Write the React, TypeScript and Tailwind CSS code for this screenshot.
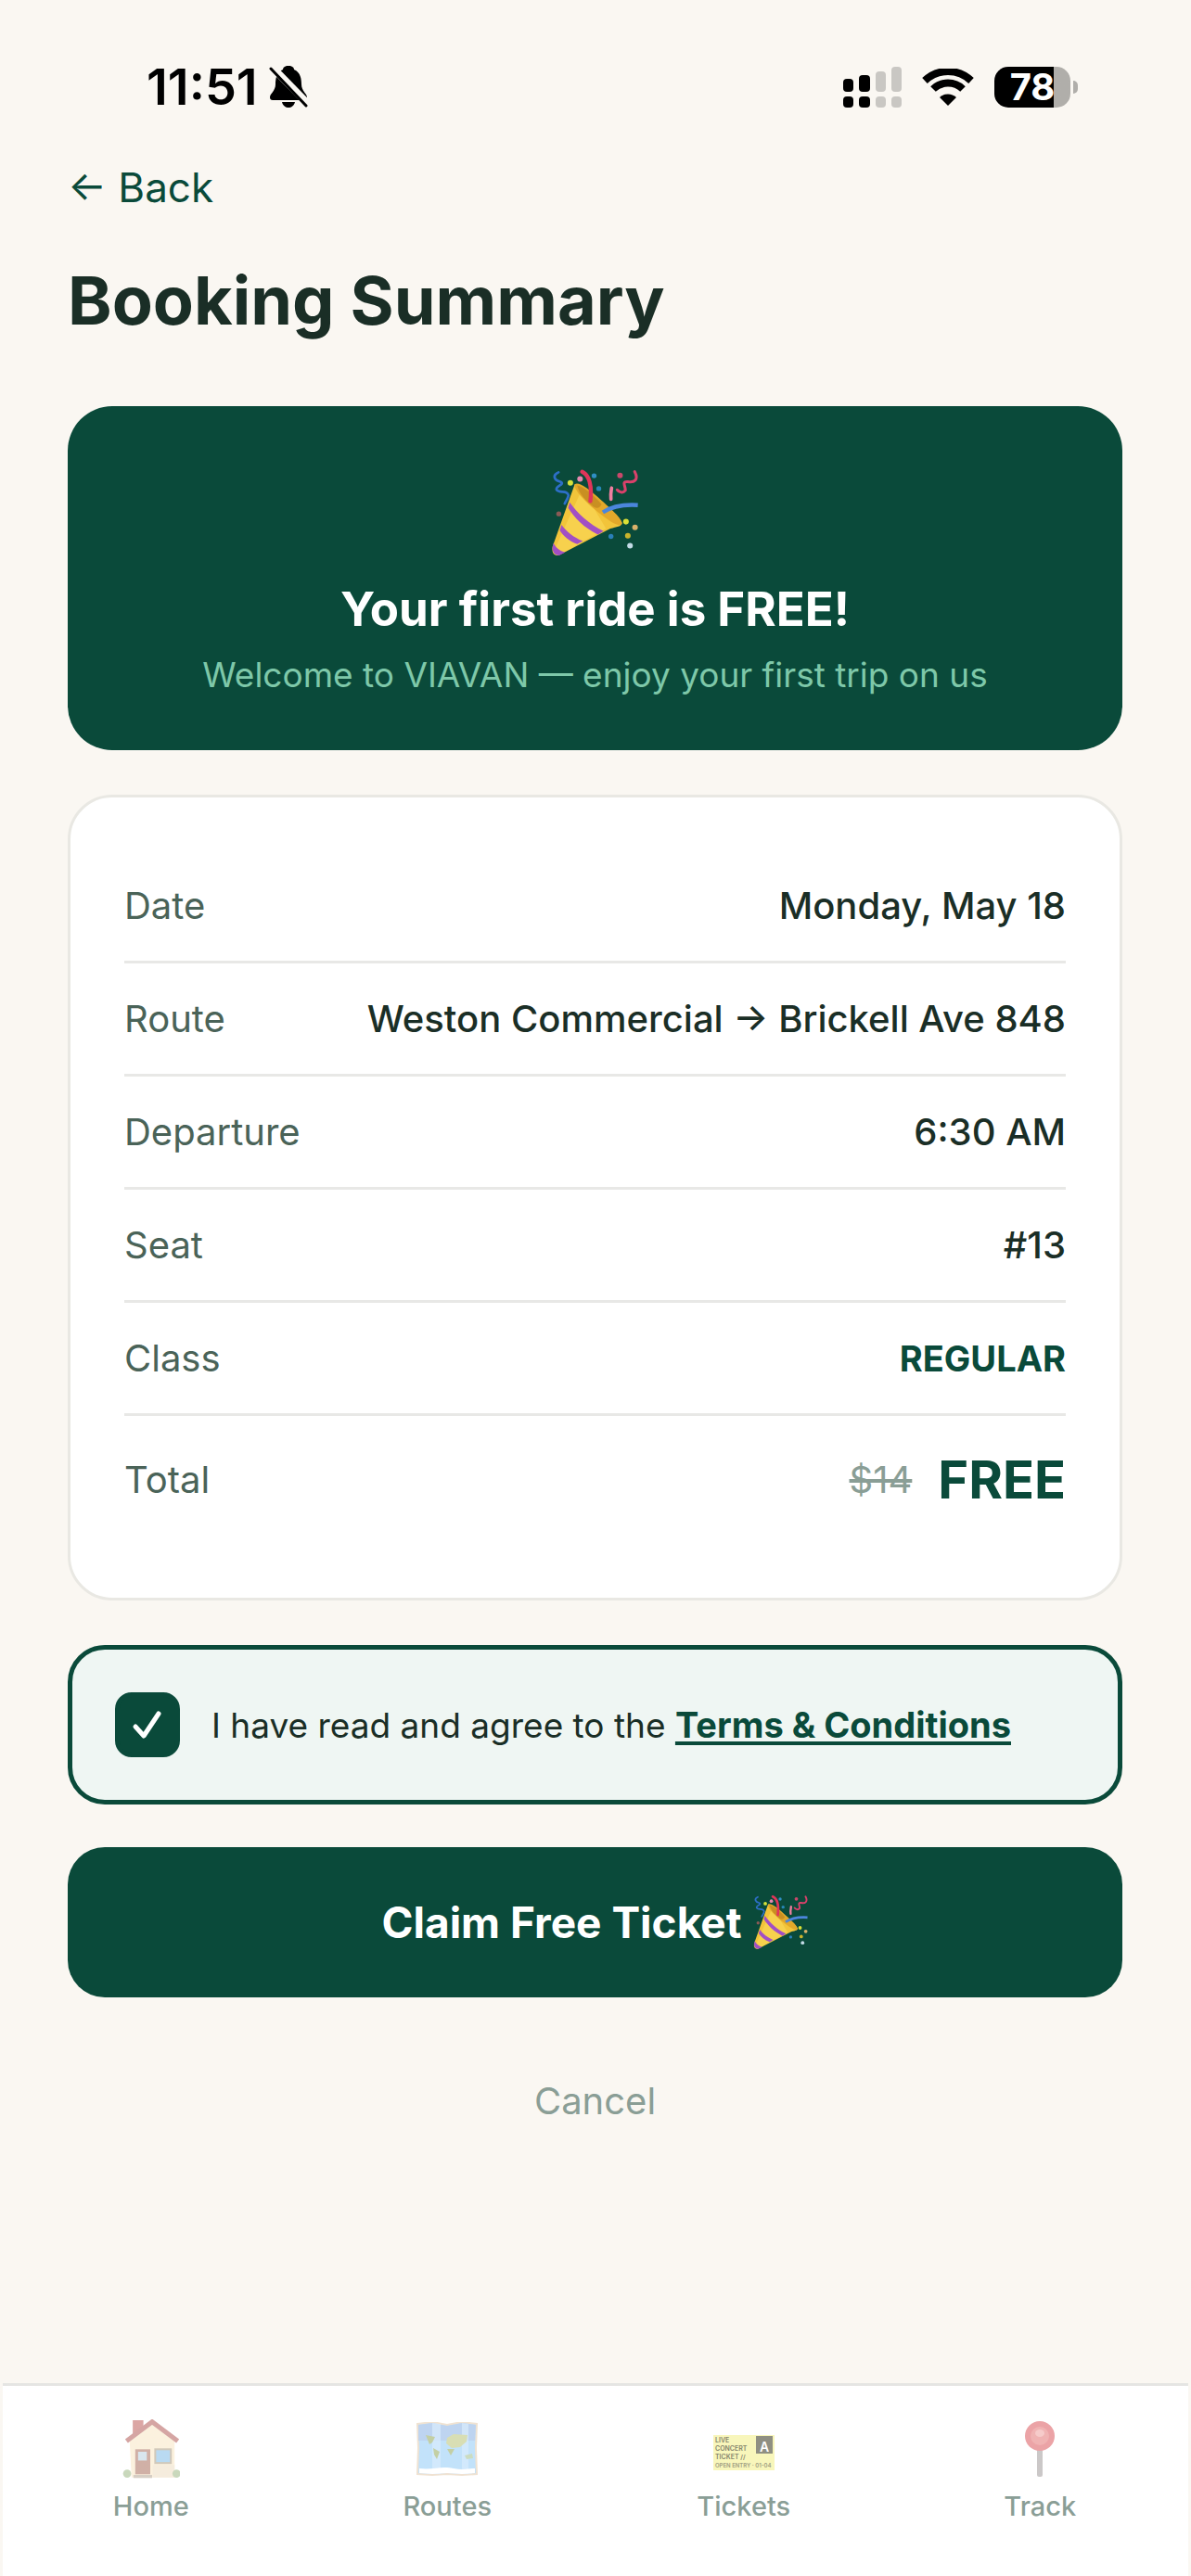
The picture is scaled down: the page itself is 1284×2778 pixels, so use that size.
import { useState } from 'react';

interface SummaryRow {
  label: string;
  value: string;
  valueClass: string;
}

const rows: SummaryRow[] = [
  { label: 'Date', value: 'Monday, May 18', valueClass: 'font-medium text-[#1a2e26]' },
  { label: 'Route', value: 'Weston Commercial → Brickell Ave 848', valueClass: 'font-medium text-[#1a2e26]' },
  { label: 'Departure', value: '6:30 AM', valueClass: 'font-medium text-[#1a2e26]' },
  { label: 'Seat', value: '#13', valueClass: 'font-medium text-[#1a2e26]' },
  { label: 'Class', value: 'REGULAR', valueClass: 'text-[38px] font-bold text-[#0a4a3a]' },
];

const tabs = [
  { label: 'Home', icon: HouseIcon },
  { label: 'Routes', icon: MapIcon },
  { label: 'Tickets', icon: TicketIcon },
  { label: 'Track', icon: PinIcon },
];

function PartyPopper({ className }: { className: string }) {
  return (
    <svg viewBox="100 75 285 285" className={className} fill="none" strokeLinecap="round" aria-hidden="true">
      <path d="M176 126 C200 128 318 222 328 250 C326 262 310 262 290 268 L124 354 C108 356 102 344 105 326 Z" fill="#f2c43a" />
      <path d="M200 140 L276 268 L124 354 C116 354 110 350 108 344 Z" fill="#fbdc5c" opacity="0.55" />
      <path d="M176 126 C190 118 218 138 262 178 C300 212 332 240 326 254 C318 264 290 246 254 218 C212 184 172 144 176 126 Z" fill="#e3a82a" />
      <path d="M184 130 C204 134 236 160 262 190 C256 204 246 204 236 198 C212 180 188 154 184 130 Z" fill="#c98f22" />
      <path d="M160 184 C186 220 222 254 268 276 L250 287 C206 266 174 232 155 202 Z" fill="#a24fc4" />
      <path d="M134 256 C150 278 172 296 202 308 L184 318 C158 308 140 292 128 274 Z" fill="#a24fc4" />
      <path d="M108 314 C116 330 128 340 146 344 L126 354 C112 354 104 342 105 328 Z" fill="#a24fc4" />
      <path d="M200 86 C222 96 232 130 226 180" stroke="#e0355a" strokeWidth="13" />
      <path d="M266 216 C296 196 330 190 378 193" stroke="#4b86dc" strokeWidth="13" strokeLinecap="butt" />
      <path d="M124 88 C102 98 112 114 130 118 C148 126 112 132 118 144 C126 156 154 144 156 162 C154 172 148 180 144 188" stroke="#2d6fc7" strokeWidth="8" />
      <path d="M368 86 C382 112 366 122 346 118 C324 116 340 134 338 146 C330 156 318 152 312 144" stroke="#d9416b" strokeWidth="9" />
      <path d="M292 174 C290 160 292 150 294 138" stroke="#f07fa0" strokeWidth="11" />
      <circle cx="238" cy="99" r="8" fill="#2f8fc4" />
      <circle cx="253" cy="140" r="8" fill="#2787b5" />
      <circle cx="162" cy="122" r="9" fill="#d6e23a" />
      <circle cx="193" cy="109" r="9" fill="#e58ab0" />
      <circle cx="321" cy="98" r="9" fill="#c9486b" />
      <circle cx="125" cy="221" r="8" fill="#8a5a55" />
      <circle cx="292" cy="293" r="8" fill="#2a7fb8" />
      <circle cx="340" cy="246" r="9" fill="#dbe036" />
      <circle cx="369" cy="264" r="9" fill="#d9b06a" />
      <circle cx="346" cy="291" r="9" fill="#c9b32c" />
      <circle cx="353" cy="323" r="9" fill="#c3dbe6" />
    </svg>
  );
}

function BellOffIcon() {
  return (
    <svg viewBox="0 0 42 46" className="h-[46px] w-[42px]" aria-hidden="true">
      <path d="M21 0 C17 0 15 2 15 4 C8 7 7 14 7 20 C7 27 1 30 1 34 C1 36 2 37 4 37 L38 37 C40 37 41 36 41 34 C41 30 35 27 35 20 C35 14 34 7 27 4 C27 2 25 0 21 0 Z" fill="#000" />
      <path d="M14 39 L28 39 C27 43 24 45 21 45 C18 45 15 43 14 39 Z" fill="#000" />
      <path d="M3 1 L43 42" stroke="#faf7f2" strokeWidth="8" />
      <path d="M2 3 L40 43" stroke="#000" strokeWidth="3" strokeLinecap="round" />
    </svg>
  );
}

function SignalIcon() {
  return (
    <svg viewBox="0 0 63 44" className="h-11 w-[63px]" aria-hidden="true">
      <g fill="#000">
        <rect x="0" y="13" width="11" height="14" rx="4" />
        <rect x="17" y="9" width="12" height="18" rx="4" />
        <rect x="0" y="32" width="11" height="12" rx="4" />
        <rect x="17" y="32" width="12" height="12" rx="4" />
      </g>
      <g fill="#c9c7c3">
        <rect x="35" y="5" width="11" height="22" rx="4" />
        <rect x="52" y="0" width="11" height="27" rx="4" />
        <rect x="35" y="32" width="11" height="12" rx="4" />
        <rect x="52" y="32" width="11" height="12" rx="4" />
      </g>
    </svg>
  );
}

function WifiIcon() {
  return (
    <svg viewBox="0 0 56 41" className="h-[41px] w-14" fill="none" stroke="#000" aria-hidden="true">
      <path d="M3 13 A36 36 0 0 1 53 13" strokeWidth="8" />
      <path d="M12 22 A23 23 0 0 1 44 22" strokeWidth="8" />
      <path d="M28 40 L19 31 A13 13 0 0 1 37 31 Z" fill="#000" stroke="none" />
    </svg>
  );
}

function HouseIcon() {
  return (
    <svg viewBox="65 60 180 190" className="h-16 w-[62px]" aria-hidden="true">
      <path d="M96 63 H130 V92 L96 120 Z" fill="#dba6a4" />
      <path d="M86 126 L158 72 L230 130 V246 H92 Z" fill="#fbf1de" />
      <path d="M160 206 H230 V246 H160 Z" fill="#f5ecdd" />
      <path d="M76 130 L158 68 L240 130" fill="none" stroke="#d5a5a3" strokeWidth="15" />
      <rect x="104" y="156" width="48" height="80" fill="#d0b0a6" />
      <rect x="113" y="164" width="28" height="28" fill="#d9e6ee" />
      <rect x="168" y="156" width="50" height="44" fill="#b9daf2" stroke="#d0c8ba" strokeWidth="6" />
      <path d="M98 238 H158 V248 H98 Z" fill="#d6cec4" />
      <circle cx="78" cy="234" r="13" fill="#c9d8bc" />
      <circle cx="236" cy="234" r="13" fill="#c9d8bc" />
    </svg>
  );
}

function MapIcon() {
  return (
    <svg viewBox="0 0 66 58" className="h-[58px] w-[66px]" aria-hidden="true">
      <path d="M1 2 L17 0 L33 3 L49 0 L65 2 L64 28 L65 56 L49 57 L33 56 L17 57 L1 56 L2 28 Z" fill="#c2e2fa" stroke="#efe2d2" strokeWidth="2" />
      <path d="M2 3 L17 1 L33 4 L49 1 L64 3 L63 20 H2 Z" fill="#bccfec" opacity="0.75" />
      <path d="M17 1 L26 2 V56 L17 56 Z M49 1 L56 2 V56 L49 56 Z" fill="#d9ecfc" opacity="0.7" />
      <path d="M3 50 C18 52 26 47 40 50 C50 52 58 50 63 50 L63 55 L49 56 L33 55 L17 56 L3 55 Z" fill="#fff" />
      <path d="M10 14 L20 16 L17 22 L14 24 Z M18 28 L25 32 L22 40 L19 35 Z M33 29 L41 29 L37 36 Z" fill="#c3cfa4" />
      <path d="M33 17 L40 13 L55 14 L54 21 L47 27 L38 28 L32 23 Z" fill="#d8deb4" />
      <path d="M52 36 L60 34 L61 39 L54 40 Z" fill="#cbdcc0" />
    </svg>
  );
}

function TicketIcon() {
  return (
    <svg viewBox="0 -8 66 46" className="h-[46px] w-[66px]" fontFamily="Inter, sans-serif" fontWeight="600" aria-hidden="true">
      <rect width="66" height="38" fill="#f8f6bb" />
      <g fill="#85856c" fontSize="7">
        <text x="2" y="8">LIVE</text>
        <text x="2" y="17">CONCERT</text>
        <text x="2" y="26">TICKET //</text>
      </g>
      <text x="2" y="35" fontSize="6" fill="#a0a082">OPEN ENTRY · 01-04</text>
      <rect x="46" y="1" width="18" height="19" fill="#8f8f82" />
      <text x="50" y="18" fontSize="14" fill="#fff">A</text>
    </svg>
  );
}

function PinIcon() {
  return (
    <svg viewBox="0 0 34 60" className="h-[60px] w-[34px]" aria-hidden="true">
      <rect x="14" y="29" width="6" height="31" rx="2" fill="#cbc8c8" />
      <circle cx="17" cy="16" r="16" fill="#eba3a6" />
      <circle cx="17" cy="16" r="10" fill="#f0b3b3" />
      <ellipse cx="17" cy="13" rx="5" ry="4" fill="#f6cbca" />
    </svg>
  );
}

export default function App() {
  const [agreed, setAgreed] = useState(true);

  return (
    <div className="flex min-h-screen flex-col bg-[#faf7f2] font-['Inter',sans-serif]">
      {/* Status bar */}
      <header className="flex items-center justify-between pt-16 pr-[122px] pb-12 pl-[158px]">
        <div className="flex items-center gap-3">
          <span className="text-[54px] leading-[60px] font-semibold text-black">11:51</span>
          <BellOffIcon />
        </div>
        <div className="flex items-center gap-[22px]">
          <SignalIcon />
          <WifiIcon />
          <div className="flex items-center gap-[3px]">
            <div className="flex h-11 w-[82px] items-center justify-center rounded-[15px] bg-linear-to-r from-black from-78% to-[#b0aeaa] to-78% text-[40px] leading-[44px] font-bold text-white">
              78
            </div>
            <div className="h-3.5 w-[5px] rounded-r-full bg-[#b0aeaa]" />
          </div>
        </div>
      </header>

      <main className="flex flex-1 flex-col pr-[74px] pl-[73px]">
        <button className="self-start text-[44px] leading-[60px] text-[#0a4a3a]">← Back</button>
        <h1 className="mt-12 text-[72px] leading-[88px] font-bold text-[#1a2e26]">Booking Summary</h1>

        {/* Promo */}
        <section className="mt-[70px] flex flex-col items-center rounded-[48px] bg-[#0a4a3a] px-12 pt-[67px] pb-14 text-center">
          <PartyPopper className="size-24" />
          <h2 className="mt-[26px] text-[51px] leading-[60px] font-bold text-white">Your first ride is FREE!</h2>
          <p className="mt-4 text-[37px] leading-[50px] text-[#7ec8a9]">Welcome to VIAVAN — enjoy your first trip on us</p>
        </section>

        {/* Trip details */}
        <dl className="mt-12 rounded-[48px] border-3 border-[#e9e8e3] bg-white px-[58px] pt-[57px] pb-[59px] text-[40px] leading-[60px]">
          {rows.map((row) => (
            <div key={row.label} className="flex h-[122px] items-center justify-between border-b-3 border-[#e8e8e6]">
              <dt className="text-[#4a6358]">{row.label}</dt>
              <dd className={row.valueClass}>{row.value}</dd>
            </div>
          ))}
          <div className="flex h-[137px] items-center justify-between">
            <dt className="text-[#4a6358]">Total</dt>
            <dd className="flex items-center gap-7">
              <s className="text-[#8a9e96]">$14</s>
              <strong className="text-[56px] font-bold text-[#0a4a3a]">FREE</strong>
            </dd>
          </div>
        </dl>

        {/* Consent */}
        <div className="mt-12 flex h-[172px] items-center gap-[34px] rounded-[40px] border-5 border-[#0a4a3a] bg-[#eff6f3] px-[46px]">
          <span className="grid size-[70px] shrink-0">
            <input
              id="terms"
              type="checkbox"
              checked={agreed}
              onChange={(e) => setAgreed(e.target.checked)}
              className="col-start-1 row-start-1 size-[70px] appearance-none rounded-[18px] border-5 border-[#0a4a3a] bg-white checked:bg-[#0a4a3a]"
            />
            {agreed && (
              <svg viewBox="0 0 70 70" className="pointer-events-none col-start-1 row-start-1 size-[70px]" aria-hidden="true">
                <path d="M22 37 L31 47 L47 23" fill="none" stroke="#fff" strokeWidth="5" strokeLinecap="round" strokeLinejoin="round" />
              </svg>
            )}
          </span>
          <label htmlFor="terms" className="text-[37px] leading-[50px] text-[#1a2e26]">
            I have read and agree to the{' '}
            <a href="#terms" className="text-[38px] font-bold text-[#0a4a3a] underline decoration-4 underline-offset-4">
              Terms &amp; Conditions
            </a>
          </label>
        </div>

        <button
          disabled={!agreed}
          className="mt-[46px] flex h-[162px] items-center justify-center gap-3 rounded-[40px] bg-[#0a4a3a] text-[46px] leading-[60px] font-bold text-white disabled:opacity-50"
        >
          Claim Free Ticket
          <PartyPopper className="size-[60px]" />
        </button>
        <button className="mt-[82px] self-center text-[40px] leading-[60px] text-[#8a9e96]">Cancel</button>
      </main>

      {/* Tab bar */}
      <nav className="mx-[3px] flex h-[208px] border-t-3 border-[#e5e5e3] bg-white">
        {tabs.map(({ label, icon: Icon }) => (
          <a key={label} href={`#${label.toLowerCase()}`} className="flex flex-1 flex-col items-center pt-9 text-[29px] leading-[36px] font-medium text-[#8a9e96]">
            <span className="mb-3 flex h-16 items-center">
              <Icon />
            </span>
            {label}
          </a>
        ))}
      </nav>
    </div>
  );
}
